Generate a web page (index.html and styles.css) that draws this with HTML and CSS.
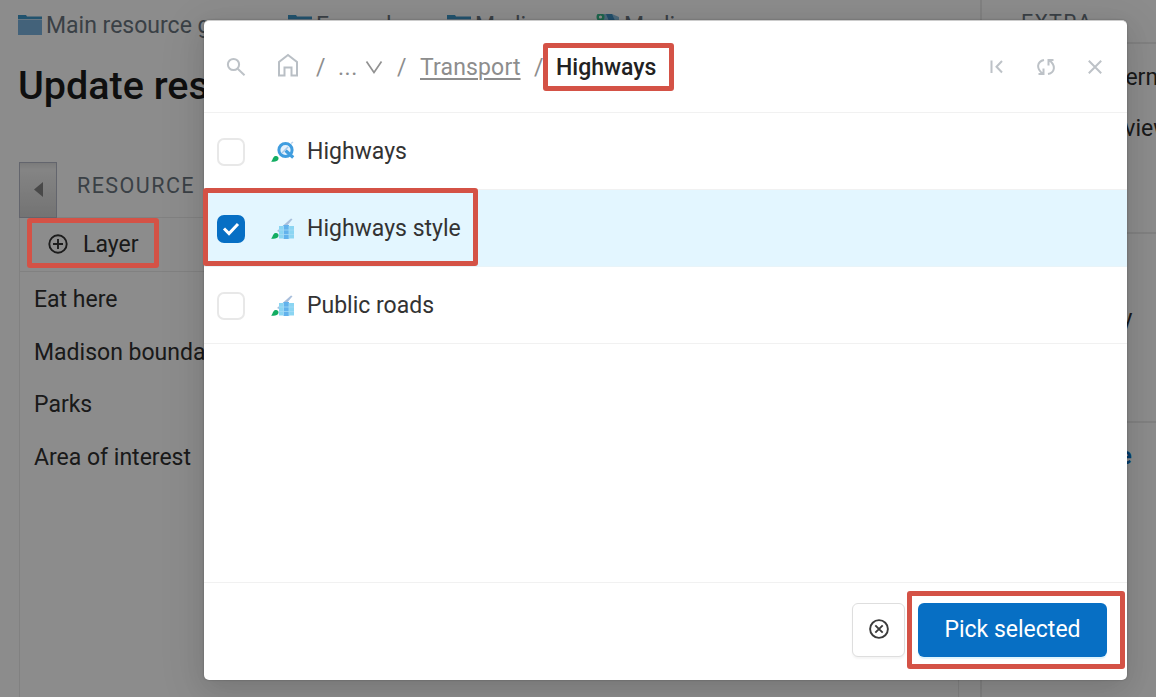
FILE: index.html
```html
<!DOCTYPE html>
<html lang="en">
<head>
<meta charset="utf-8">
<title>Update resource</title>
<link rel="stylesheet" href="styles.css">
</head>
<body>
<svg class="defs" width="0" height="0">
  <defs>
    <symbol id="folder" viewBox="0 0 24 20"><path d="M0 0h8l1 1.500h15V4H0z" fill="#3f97c9"/><path d="M0 4.500h24V20H0z" fill="#7ab3df"/></symbol>
    <symbol id="brush-grid" viewBox="0 0 24 22">
      <path d="M6 13 20 .5l1.500.8L10 15z" fill="#a9bfdc"/>
      <path d="M8 8h15v12.500H8z" fill="#8bd5f2"/>
      <path d="M12.500 7h5.500v14h-5.500z" fill="#62b2ec"/>
      <path d="M8 12h15M8 16.500h15M12.500 8v13M18 8v13" stroke="#a5daf6" stroke-width=".8"/>
      <path d="M0 20.500c2-1 1.500-5 4.500-5.500 2-.3 3.500 1.200 3 3-.6 2.500-4 3.200-7.500 2.500z" fill="#12ad62"/>
    </symbol>
    <symbol id="brush-q" viewBox="0 0 24 22">
      <path d="M20 2.500 22 1" stroke="#bdd3ea" stroke-width="1.500"/>
      <circle cx="14.500" cy="9" r="6.600" fill="#e5f1fb" stroke="#409ddf" stroke-width="3"/>
      <path d="m14.500 9.500 7.700 7" stroke="#409ddf" stroke-width="3.200"/>
      <path d="m11 12 6-6" stroke="#a7c8e8" stroke-width="1.500"/>
      <path d="M0 20.500c2-1 1.500-5 4.500-5.500 2-.3 3.500 1.200 3 3-.6 2.500-4 3.200-7.500 2.500z" fill="#12ad62"/>
    </symbol>
  </defs>
</svg>
<div class="page">
  <main class="main">
    <nav class="trail">
      <span class="crumb crumb-first"><svg class="folder"><use href="#folder"/></svg>Main resource group</span>
      <span class="crumb crumb-second"><svg class="folder"><use href="#folder"/></svg>Examples</span>
      <span class="crumb crumb-third"><svg class="folder"><use href="#folder"/></svg>Madison</span>
      <span class="crumb"><svg class="folder map" viewBox="0 0 24 20"><path d="M8 0h8l7 3v17H6z" fill="#8dbfe0"/><path d="m10 0 6 0 4 9-5 3z" fill="#3c8ec2"/><circle cx="4.500" cy="3" r="2.800" fill="none" stroke="#35b98a" stroke-width="2.400"/></svg>Madison</span>
    </nav>
    <h1 class="title">Update resource</h1>
    <section class="editor">
      <div class="tabs"><div class="tab-arrow"><svg width="11" height="17"><path d="M10 1v15L1 8.500z" fill="#858585"/></svg></div><span class="tab-label">RESOURCE</span></div>
      <div class="panel">
        <div class="toolbar"><svg class="plus" viewBox="0 0 20 20"><circle cx="10" cy="10" r="8.700"/><path d="M10 5v10M5 10h10"/></svg>Layer</div>
        <div class="layer">Eat here</div>
        <div class="layer">Madison boundary</div>
        <div class="layer">Parks</div>
        <div class="layer">Area of interest</div>
      </div>
    </section>
  </main>
  <aside class="side">
    <div class="side-head">EXTRA</div>
    <div class="side-group group-extra"><div class="side-item">User permissions</div><div class="side-item">JSON view</div></div>
    <div class="side-group group-map"><div class="side-item">Display</div></div>
    <div class="side-group group-action"><div class="side-item active">Update</div></div>
  </aside>
</div>
<div class="mask"></div>
<div class="modal">
  <header class="modal-head">
    <svg class="search" viewBox="0 0 20 20"><circle cx="7.500" cy="7.500" r="5.600"/><path d="m11.700 11.700 6.800 6.500"/></svg>
    <svg class="home" viewBox="0 0 22 24"><path d="M2 22.500V9L11 2l9 7v13.500h-5.500v-8h-7v8z"/></svg>
    <span class="slash">/</span>
    <span class="dots">...</span>
    <svg class="chevron" viewBox="0 0 18 14"><path d="m1.500 1.500 7.500 11 7.500-11"/></svg>
    <span class="slash slash-two">/</span>
    <span class="link">Transport</span>
    <span class="slash slash-three">/</span>
    <span class="current">Highways</span>
    <div class="tools">
      <svg width="14" height="16" viewBox="0 0 14 16"><path d="M1.500 1.500v12.500M12 2 6.500 7.700l5.500 5.800"/></svg>
      <svg width="18" height="18" viewBox="0 0 18 18"><path d="M7 2C0 3.500-1 10.500 5.500 15.500M1.500 16h5v-5.500M11 16c7-1.500 8-8.500 1.500-13.500M16.500 2h-5v5.500"/></svg>
      <svg width="16" height="16" viewBox="0 0 16 16"><path d="m1.800 1.800 12.400 12.400M14.200 1.800 1.800 14.200"/></svg>
    </div>
  </header>
  <div class="list">
    <div class="row"><span class="check"></span><svg class="kind"><use href="#brush-q"/></svg>Highways</div>
    <div class="row selected"><span class="check"><svg width="18" height="14" viewBox="0 0 18 14"><path d="m2 6.500 5 5L16 2" fill="none" stroke="#fff" stroke-width="3"/></svg></span><svg class="kind"><use href="#brush-grid"/></svg>Highways style</div>
    <div class="row"><span class="check"></span><svg class="kind"><use href="#brush-grid"/></svg>Public roads</div>
  </div>
  <footer class="modal-foot">
    <button class="cancel"><svg width="22" height="22" viewBox="0 0 22 22"><circle cx="11" cy="11" r="8.900"/><path d="m7.300 7.300 7.400 7.400M14.700 7.300l-7.400 7.400"/></svg></button>
    <button class="pick">Pick selected</button>
  </footer>
</div>
<div class="mark mark-layer"></div>
<div class="mark mark-current"></div>
<div class="mark mark-row"></div>
<div class="mark mark-pick"></div>
</body>
</html>
```
FILE: styles.css
```css
* { box-sizing: border-box; }
body { margin: 0; height: 697px; overflow: hidden; position: relative; background: #fff; font: 23px/30px Roboto, sans-serif; color: #303030; }
.defs { position: absolute; }
.page { display: grid; grid-template-columns: 980px 176px; height: 697px; }
.main { padding: 10px 21px 0 19px; overflow: hidden; }
.trail { display: flex; color: #6b7680; white-space: nowrap; }
.crumb { display: flex; align-items: center; padding-top: 1px; }
.crumb-first { width: 270px; }
.crumb-second { width: 159px; }
.crumb-third { width: 149px; }
.folder { width: 24px; height: 20px; margin: -2px 4px 0 -1px; flex: none; }
.map { margin: -4px 4px 0 -1px; }
.title { margin: 20px 0 0 -1px; font-size: 39.500px; line-height: 50px; font-weight: 500; color: #1c1c1c; white-space: nowrap; }
.editor { margin-top: 51px; }
.tabs { display: flex; height: 56px; border-bottom: 1px solid #ebebeb; }
.tab-arrow { width: 38px; height: 56px; display: flex; align-items: center; justify-content: center; padding-bottom: 2px; border: 1px solid #b5b9c6; background: linear-gradient(#e0e0e0, #f1f1f1 12%, #d2d2d2); }
.tab-label { margin: 9px 0 0 20px; font-size: 21.500px; letter-spacing: 1.450px; color: #6b7680; }
.panel { height: 500px; border: 1px solid #ebebeb; border-top: 0; }
.toolbar { display: flex; align-items: center; height: 54px; padding-left: 28px; border-bottom: 1px solid #ebebeb; }
.plus { width: 20px; height: 20px; margin: -2px 15px 0 0; fill: none; stroke: #333; stroke-width: 1.900; }
.layer { height: 52.600px; padding-left: 14px; line-height: 55px; }
.side { border-left: 2px solid #ebebeb; overflow: hidden; white-space: nowrap; }
.side-head { height: 44px; padding: 8px 0 0 39px; border-bottom: 2px solid #ebebeb; font-size: 21.500px; letter-spacing: 1.200px; color: #6b7680; }
.side-group { padding-left: 76px; border-bottom: 2px solid #ebebeb; }
.group-extra { height: 190px; padding: 8px 0 0 78px; }
.group-map { height: 189px; padding-top: 59px; }
.group-action { height: 275px; padding-top: 8px; border-bottom: 0; }
.side-item { line-height: 51px; }
.active { font-weight: 700; color: #0870c5; }
.mask { position: absolute; inset: 0; background: rgba(0, 0, 0, .45); }
.modal { position: absolute; left: 204px; top: 20px; width: 923px; height: 660px; display: flex; flex-direction: column; background: #fff; border-radius: 5px; border-top: 1px solid #ccc; box-shadow: 0 0 2px rgba(0, 0, 0, .3), 0 8px 24px rgba(0, 0, 0, .09), 0 10px 44px 8px rgba(0, 0, 0, .07); }
.modal-head { height: 92px; display: flex; align-items: center; padding: 0 24px 0 22px; border-bottom: 1px solid #f1f1f1; color: #8d8d8d; }
.modal-head > span { padding-top: 2px; }
.search { width: 20px; height: 20px; fill: none; stroke: #bdc2c7; stroke-width: 2; }
.home { width: 22px; height: 24px; margin: 0 17px 3px 31px; fill: none; stroke: #b9bfc5; stroke-width: 2; }
.slash { width: 10px; }
.dots { width: 19px; margin-left: 12px; letter-spacing: .5px; }
.chevron { width: 18px; height: 14px; margin: 0 14px 0 8px; fill: none; stroke: #929292; stroke-width: 1.700; }
.slash-two { width: 9px; margin-right: 14px; }
.link { width: 101px; letter-spacing: .15px; text-decoration: underline; text-decoration-thickness: 2px; text-underline-offset: 3px; }
.slash-three { margin: 0 12px 0 13px; }
.current { font-weight: 500; color: #222; }
.tools { display: flex; align-items: center; gap: 32.500px; margin-left: auto; }
.tools svg { fill: none; stroke: #bdc2c7; stroke-width: 2; }
.list { flex: 1; }
.row { display: flex; align-items: center; height: 77px; padding: 2px 0 0 13px; border-bottom: 1px solid #f1f1f1; color: #333; }
.selected { background: #e3f6ff; border-color: #e8f4f9; }
.check { width: 28px; height: 28px; margin-right: 26px; border: 2px solid #e8e8e8; border-radius: 7px; display: flex; align-items: center; justify-content: center; background: #fff; }
.selected .check { background: #076fc4; border-color: #076fc4; }
.kind { width: 24px; height: 22px; margin-right: 12px; }
.modal-foot { height: 98px; display: flex; justify-content: flex-end; gap: 13px; padding: 20px 20px 0; border-top: 1px solid #f1f1f1; }
.cancel, .pick { height: 54px; padding: 0; border-radius: 6px; font: inherit; }
.cancel { width: 53px; padding-bottom: 2px; display: flex; align-items: center; justify-content: center; background: #fff; border: 1px solid #dedede; box-shadow: 0 2px 2px #f5f5f5; }
.cancel svg { fill: none; stroke: #3b3b3b; stroke-width: 1.900; }
.pick { width: 189px; border: 0; background: #076fc4; color: #fff; box-shadow: 0 2px 1px #dff4fd; }
.mark { position: absolute; border: 5px solid #d45246; border-radius: 3px; }
.mark-layer { left: 27px; top: 218px; width: 132px; height: 50px; }
.mark-current { left: 543px; top: 43px; width: 131px; height: 48px; }
.mark-row { left: 203px; top: 188px; width: 275px; height: 78px; }
.mark-pick { left: 907px; top: 591px; width: 218px; height: 78px; }
```
